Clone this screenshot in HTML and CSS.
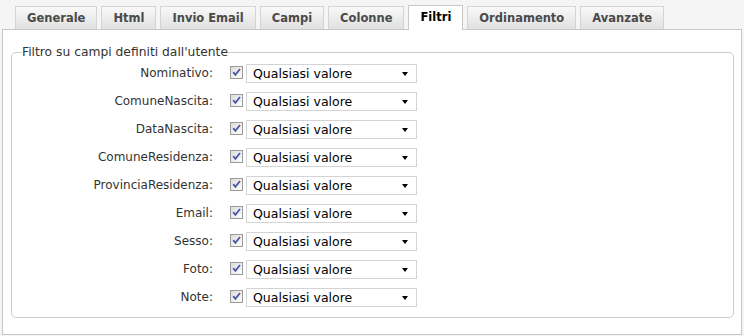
FILE: index.html
```html
<!DOCTYPE html>
<html lang="it">
<head>
    <meta charset="UTF-8">
    <title>Filtri</title>
    <link rel="stylesheet" href="styles.css">
</head>
<body>
    <ul class="tabs">
        <li><a href="#">Generale</a></li>
        <li><a href="#">Html</a></li>
        <li><a href="#">Invio Email</a></li>
        <li><a href="#">Campi</a></li>
        <li><a href="#">Colonne</a></li>
        <li class="active"><a href="#">Filtri</a></li>
        <li><a href="#">Ordinamento</a></li>
        <li><a href="#">Avanzate</a></li>
    </ul>

    <div class="panel">
        <fieldset class="filters">
            <legend>Filtro su campi definiti dall'utente</legend>

            <div class="row">
                <label>Nominativo:</label>
                <span class="check"><svg viewBox="0 0 11 11"><path d="M2.2 5.2l2.2 2.6L9 2" /></svg></span>
                <div class="select"><select><option>Qualsiasi valore</option></select></div>
            </div>
            <div class="row">
                <label>ComuneNascita:</label>
                <span class="check"><svg viewBox="0 0 11 11"><path d="M2.2 5.2l2.2 2.6L9 2" /></svg></span>
                <div class="select"><select><option>Qualsiasi valore</option></select></div>
            </div>
            <div class="row">
                <label>DataNascita:</label>
                <span class="check"><svg viewBox="0 0 11 11"><path d="M2.2 5.2l2.2 2.6L9 2" /></svg></span>
                <div class="select"><select><option>Qualsiasi valore</option></select></div>
            </div>
            <div class="row">
                <label>ComuneResidenza:</label>
                <span class="check"><svg viewBox="0 0 11 11"><path d="M2.2 5.2l2.2 2.6L9 2" /></svg></span>
                <div class="select"><select><option>Qualsiasi valore</option></select></div>
            </div>
            <div class="row">
                <label>ProvinciaResidenza:</label>
                <span class="check"><svg viewBox="0 0 11 11"><path d="M2.2 5.2l2.2 2.6L9 2" /></svg></span>
                <div class="select"><select><option>Qualsiasi valore</option></select></div>
            </div>
            <div class="row">
                <label>Email:</label>
                <span class="check"><svg viewBox="0 0 11 11"><path d="M2.2 5.2l2.2 2.6L9 2" /></svg></span>
                <div class="select"><select><option>Qualsiasi valore</option></select></div>
            </div>
            <div class="row">
                <label>Sesso:</label>
                <span class="check"><svg viewBox="0 0 11 11"><path d="M2.2 5.2l2.2 2.6L9 2" /></svg></span>
                <div class="select"><select><option>Qualsiasi valore</option></select></div>
            </div>
            <div class="row">
                <label>Foto:</label>
                <span class="check"><svg viewBox="0 0 11 11"><path d="M2.2 5.2l2.2 2.6L9 2" /></svg></span>
                <div class="select"><select><option>Qualsiasi valore</option></select></div>
            </div>
            <div class="row">
                <label>Note:</label>
                <span class="check"><svg viewBox="0 0 11 11"><path d="M2.2 5.2l2.2 2.6L9 2" /></svg></span>
                <div class="select"><select><option>Qualsiasi valore</option></select></div>
            </div>
        </fieldset>
    </div>
</body>
</html>
```

FILE: styles.css
```css
body {
    margin: 0;
    background-color: #f5f5f5;
    font-family: "DejaVu Sans", Verdana, sans-serif;
    font-size: 12px;
    color: #333;
}

/* tab strip */
.tabs {
    list-style: none;
    margin: 0;
    padding: 6px 0 0 15px;
    display: flex;
    align-items: flex-end;
    gap: 4px;
    height: 23px;
}

.tabs li {
    height: 22px;
    border: 1px solid #d4d4d4;
    border-bottom: none;
    background: linear-gradient(#f9f9f9, #e0e0e0);
}

.tabs a {
    display: block;
    padding: 0 11px;
    line-height: 22px;
    font-size: 11.5px;
    font-weight: bold;
    color: #4a4a4a;
    text-decoration: none;
}

.tabs li.active {
    height: 24px;
    background: #fff;
    border-color: #c8c8c8;
    position: relative;
    top: 1px;
}

.tabs li.active a {
    color: #000;
    line-height: 23px;
}

/* content panel */
.panel {
    margin: 0 2px;
    height: 304px;
    background: #fff;
    border: 1px solid #c8c8c8;
}

.filters {
    margin: 15px 7px 0 8px;
    padding: 0 10px 6px 10px;
    border: 1px solid #cdcdcd;
    border-radius: 5px;
}

.filters legend {
    padding: 0;
    font-size: 12.3px;
    color: #333;
}

.row {
    display: flex;
    align-items: center;
    height: 28px;
}

.row label {
    width: 191px;
    text-align: right;
    font-size: 12px;
    color: #333;
}

.row .check {
    display: block;
    width: 11px;
    height: 11px;
    margin: -1px 3px 0 17px;
    border: 1px solid #9a9a9a;
    background: linear-gradient(135deg, #dcdcdc, #fdfdfd);
}

.row .check svg {
    display: block;
    width: 11px;
    height: 11px;
}

.row .check path {
    fill: none;
    stroke: #4b57a6;
    stroke-width: 1.8;
}

.select {
    position: relative;
    width: 171px;
    height: 19px;
}

.select select {
    appearance: none;
    display: block;
    width: 171px;
    height: 19px;
    padding: 0 0 0 6px;
    border: 1px solid #d4d4d4;
    border-radius: 0;
    background: #fff;
    font-family: "DejaVu Sans", Verdana, sans-serif;
    font-size: 12.5px;
    color: #000;
}

.select::after {
    content: "";
    position: absolute;
    right: 9px;
    top: 8px;
    border-left: 3.5px solid transparent;
    border-right: 3.5px solid transparent;
    border-top: 4px solid #000;
}
```
